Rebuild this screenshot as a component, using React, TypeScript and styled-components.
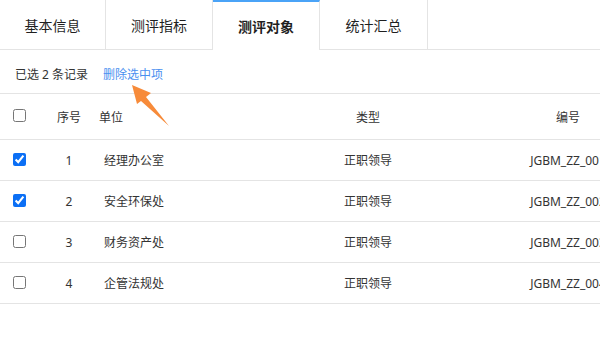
import React, { useState } from "react";
import styled, { createGlobalStyle } from "styled-components";

const Global = createGlobalStyle`
  html, body { margin: 0; padding: 0; background: #fff; overflow: hidden; }
  body { font-family: "Noto Sans", "Noto Sans CJK SC", sans-serif; color: #303133; }
`;

const Page = styled.div`
  position: relative;
  width: 600px;
  height: 356px;
  overflow: hidden;
`;

const TabBar = styled.div`
  display: flex;
  height: 49px;
  border-bottom: 1px solid #e4e4e4;
`;

const Tab = styled.div<{ $active?: boolean; $w: number }>`
  flex: 0 0 ${(p) => p.$w}px;
  box-sizing: border-box;
  height: ${(p) => (p.$active ? 50 : 49)}px;
  display: flex;
  align-items: center;
  justify-content: center;
  font-size: 14px;
  color: #1f1f1f;
  font-weight: ${(p) => (p.$active ? 600 : 400)};
  border-right: 1px solid #e4e4e4;
  border-top: ${(p) => (p.$active ? "2px solid #4aa3f7" : "0")};
  background: #fff;
  padding-top: ${(p) => (p.$active ? 1 : 0)}px;
  padding-bottom: ${(p) => (p.$active ? 1 : 0)}px;
`;

const Toolbar = styled.div`
  display: flex;
  align-items: center;
  gap: 15px;
  box-sizing: border-box;
  height: 44px;
  padding: 5px 0 0 15px;
  border-bottom: 1px solid #e4e4e4;
  font-size: 12px;
  color: #333;
`;

const LinkText = styled.span`
  color: #4a90f0;
  cursor: pointer;
`;

const Grid = styled.div`
  display: grid;
  grid-template-columns: 40px 58px 180px 180px 220px;
  width: 678px;
`;

const Row = styled(Grid)<{ $head?: boolean }>`
  height: ${(p) => (p.$head ? 45 : 40)}px;
  border-bottom: 1px solid #e4e4e4;
  font-size: 12px;
  color: #333;
`;

const Cell = styled.div<{ $align?: string; $pl?: number }>`
  display: flex;
  align-items: center;
  justify-content: ${(p) => p.$align || "center"};
  padding-left: ${(p) => p.$pl || 0}px;
  white-space: nowrap;
  overflow: hidden;
`;

const CheckCell = styled.div`
  display: flex;
  align-items: center;
  padding-left: 13px;
  padding-bottom: 2px;
`;

const Check = styled.input`
  width: 13px;
  height: 13px;
  margin: 0;
  accent-color: #0b6ff5;
`;

const Arrow = styled.svg`
  position: absolute;
  left: 0;
  top: 0;
  pointer-events: none;
`;

const rows = [
  { n: 1, unit: "经理办公室", type: "正职领导", code: "JGBM_ZZ_001", checked: true },
  { n: 2, unit: "安全环保处", type: "正职领导", code: "JGBM_ZZ_002", checked: true },
  { n: 3, unit: "财务资产处", type: "正职领导", code: "JGBM_ZZ_003", checked: false },
  { n: 4, unit: "企管法规处", type: "正职领导", code: "JGBM_ZZ_004", checked: false },
];

const tabs = [
  { label: "基本信息", w: 106 },
  { label: "测评指标", w: 107 },
  { label: "测评对象", w: 107, active: true },
  { label: "统计汇总", w: 108 },
];

export default function App() {
  const [checks, setChecks] = useState(rows.map((r) => r.checked));
  return (
    <Page>
      <Global />
      <TabBar>
        {tabs.map((t) => (
          <Tab key={t.label} $active={t.active} $w={t.w}>
            {t.label}
          </Tab>
        ))}
      </TabBar>
      <Toolbar>
        <span>已选 2 条记录</span>
        <LinkText>删除选中项</LinkText>
      </Toolbar>
      <Row $head>
        <CheckCell>
          <Check type="checkbox" readOnly checked={false} />
        </CheckCell>
        <Cell>序号</Cell>
        <Cell $align="flex-start" $pl={1}>单位</Cell>
        <Cell>类型</Cell>
        <Cell>编号</Cell>
      </Row>
      {rows.map((r, i) => (
        <Row key={r.n}>
          <CheckCell>
            <Check
              type="checkbox"
              checked={checks[i]}
              onChange={() => setChecks(checks.map((c, j) => (j === i ? !c : c)))}
            />
          </CheckCell>
          <Cell>{r.n}</Cell>
          <Cell $align="flex-start" $pl={6}>{r.unit}</Cell>
          <Cell>{r.type}</Cell>
          <Cell>{r.code}</Cell>
        </Row>
      ))}
      <Arrow width="600" height="356" viewBox="0 0 600 356">
        <polygon
          points="132,85 151,93 146,97 169,126 141,101 137,104"
          fill="#f78b3a"
        />
      </Arrow>
    </Page>
  );
}
